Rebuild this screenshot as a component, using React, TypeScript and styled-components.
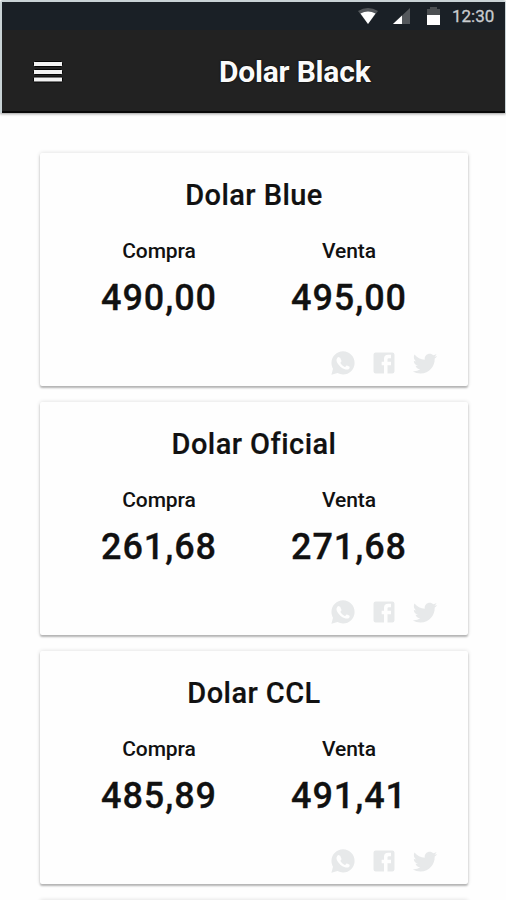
import React from "react";
import styled, { createGlobalStyle } from "styled-components";

const GlobalStyle = createGlobalStyle`
  * { box-sizing: border-box; }
  body { margin: 0; background: #fefefe; font-family: Roboto, "Liberation Sans", sans-serif; overflow: hidden; }
`;

const Screen = styled.div`
  width: 506px;
  height: 900px;
  overflow: hidden;
  display: flex;
  flex-direction: column;
  background: #fefefe;
`;

const Header = styled.header`
  flex: none;
  height: 113px;
  border: solid #c9d3d6;
  border-width: 2px 1px 0 2px;
  border-radius: 3px 3px 0 0;
  box-shadow: 0 1px 3px rgba(0, 0, 0, 0.4);
`;

const StatusBar = styled.div`
  height: 28px;
  display: flex;
  align-items: center;
  justify-content: flex-end;
  padding-right: 11px;
  background: #1a2026;
`;

const StatusIcon = styled.svg<{ $gap: number }>`
  display: block;
  flex: none;
  margin-right: ${(p) => p.$gap}px;
`;

const Clock = styled.span`
  width: 42px;
  font-size: 17px;
  line-height: 28px;
  color: #c9cccf;
  -webkit-text-stroke: 0.3px #c9cccf;
  white-space: nowrap;
`;

const AppBar = styled.div`
  height: 83px;
  display: flex;
  align-items: center;
  padding: 2px 0 0 31px;
  background: #222222;
  border-bottom: 2px solid #080808;
`;

const MenuButton = styled.button`
  width: 31px;
  height: 22px;
  padding: 0;
  border: 0;
  background: none;
`;

const AppTitle = styled.h1`
  margin: 1px 0 0 155px;
  font-size: 30px;
  line-height: 34px;
  font-weight: 700;
  letter-spacing: -0.2px;
  color: #fafafa;
  text-shadow: 0 0 2px #000;
  white-space: nowrap;
`;

const CardList = styled.main`
  flex: none;
  display: flex;
  flex-direction: column;
  gap: 16px;
  padding: 40px 38px 0 40px;
`;

const Card = styled.section`
  height: 233px;
  flex: none;
  padding: 24px 30px 0;
  border-radius: 2px;
  background: #fefefe;
  box-shadow: 0 2px 2px rgba(0, 0, 0, 0.25), 0 0 4px rgba(0, 0, 0, 0.14);
`;

const CardTitle = styled.h2`
  margin: 0;
  font-size: 29px;
  line-height: 36px;
  font-weight: 500;
  letter-spacing: 0.45px;
  text-align: center;
  color: #111;
  -webkit-text-stroke: 0.2px #111;
`;

const Prices = styled.div`
  display: grid;
  grid-template-columns: 190px 190px;
  justify-content: center;
  margin-top: 24px;
`;

const Price = styled.div`
  text-align: center;
  color: #111;
`;

const PriceLabel = styled.div`
  font-size: 21px;
  line-height: 28px;
  font-weight: 500;
  letter-spacing: -0.1px;
`;

const PriceValue = styled.div`
  margin-top: 10px;
  font-size: 36px;
  line-height: 46px;
  font-weight: 500;
  letter-spacing: 0.9px;
  -webkit-text-stroke: 0.3px #111;
`;

const Share = styled.div`
  display: flex;
  justify-content: flex-end;
  gap: 13px;
  margin: 28px -1px 0 0;
  height: 28px;
`;

const ShareIcon = styled.svg`
  display: block;
  width: 28px;
  height: 28px;
  fill: #e7e9ea;
`;

const WHATSAPP =
  "M12.04 2C6.58 2 2.13 6.45 2.13 11.91c0 1.75.46 3.45 1.32 4.95L2.05 22l5.25-1.38a9.9 9.9 0 0 0 4.74 1.21c5.46 0 9.91-4.45 9.91-9.91S17.5 2 12.04 2M8.53 7.33c.2 0 .4 0 .57.01.18.01.42-.07.66.5.25.6.84 2.06.91 2.2.08.15.13.33.03.53-.64 1.2-1.06 1.13-.78 1.6.98 1.68 2.1 2.4 3.62 3.16.25.12.4.11.55-.07.15-.17.64-.75.81-1 .17-.26.34-.22.57-.13.24.08 1.5.7 1.75.83.26.12.43.19.49.29.06.1.06.6-.15 1.19-.2.58-1.22 1.13-1.67 1.17-.43.05-.97.21-3.37-.73-2.88-1.14-4.75-4.08-4.9-4.28-.14-.19-1.17-1.57-1.17-2.99s.74-2.1 1.01-2.4c.27-.28.58-.35.77-.35z";
const FACEBOOK =
  "M5 3H19A2 2 0 0 1 21 5V19A2 2 0 0 1 19 21H5A2 2 0 0 1 3 19V5A2 2 0 0 1 5 3M18 5H15.5A3.5 3.5 0 0 0 12 8.5V11H10V14H12V21H15V14H18V11H15V9A1 1 0 0 1 16 8H18V5Z";
const TWITTER =
  "M22.46 6c-.77.35-1.6.58-2.46.69.88-.53 1.56-1.37 1.88-2.38-.83.5-1.75.85-2.72 1.05C18.37 4.5 17.26 4 16 4c-2.35 0-4.27 1.92-4.27 4.29 0 .34.04.67.11.98C8.28 9.09 5.11 7.38 3 4.79c-.37.63-.58 1.37-.58 2.15 0 1.49.75 2.81 1.91 3.56-.71 0-1.37-.2-1.95-.5v.03c0 2.08 1.48 3.82 3.44 4.21a4.2 4.2 0 0 1-1.93.07 4.28 4.28 0 0 0 4 2.98 8.52 8.52 0 0 1-5.33 1.84q-.51 0-1.02-.06C3.44 20.29 5.7 21 8.12 21 16 21 20.33 14.46 20.33 8.79c0-.19 0-.37-.01-.56.84-.6 1.56-1.36 2.14-2.23";

const rates = [
  { name: "Dolar Blue", buy: "490,00", sell: "495,00" },
  { name: "Dolar Oficial", buy: "261,68", sell: "271,68" },
  { name: "Dolar CCL", buy: "485,89", sell: "491,41" },
];

export default function App() {
  return (
    <>
      <GlobalStyle />
      <Screen>
        <Header>
          <StatusBar>
            <StatusIcon $gap={15} width="20" height="16" viewBox="0 0 20 16">
              <path d="M0 3Q10-3 20 3L10 16Z" fill="#54585c" />
              <path d="M2.5 5.5Q10 1.5 17.5 5.5L10 16Z" fill="#fff" />
            </StatusIcon>
            <StatusIcon $gap={17} width="17" height="16" viewBox="0 0 17 16">
              <path d="M17 0V16H0Z" fill="#54585c" />
              <path d="M9 7.5V16H0Z" fill="#fff" />
            </StatusIcon>
            <StatusIcon $gap={12} width="13" height="18" viewBox="0 0 13 18">
              <path d="M0 2H3V0H10V2H13V9H0Z" fill="#4b4f52" />
              <path d="M0 8H13V18H0Z" fill="#fff" />
            </StatusIcon>
            <Clock>12:30</Clock>
          </StatusBar>
          <AppBar>
            <MenuButton aria-label="Menu">
              <svg width="30" height="22" viewBox="0 0 30 22" fill="#f2f2f2" stroke="#050505" strokeWidth="1" display="block">
                <rect x=".5" y=".5" width="29" height="5" rx="1" />
                <rect x=".5" y="8.5" width="29" height="5" rx="1" />
                <rect x=".5" y="16" width="29" height="5" rx="1" />
              </svg>
            </MenuButton>
            <AppTitle>Dolar Black</AppTitle>
          </AppBar>
        </Header>
        <CardList>
          {rates.map((rate) => (
            <Card key={rate.name}>
              <CardTitle>{rate.name}</CardTitle>
              <Prices>
                <Price>
                  <PriceLabel>Compra</PriceLabel>
                  <PriceValue>{rate.buy}</PriceValue>
                </Price>
                <Price>
                  <PriceLabel>Venta</PriceLabel>
                  <PriceValue>{rate.sell}</PriceValue>
                </Price>
              </Prices>
              <Share>
                {[WHATSAPP, FACEBOOK, TWITTER].map((path) => (
                  <ShareIcon key={path} viewBox="0 0 24 24">
                    <path d={path} fillRule="evenodd" />
                  </ShareIcon>
                ))}
              </Share>
            </Card>
          ))}
          <Card />
        </CardList>
      </Screen>
    </>
  );
}
